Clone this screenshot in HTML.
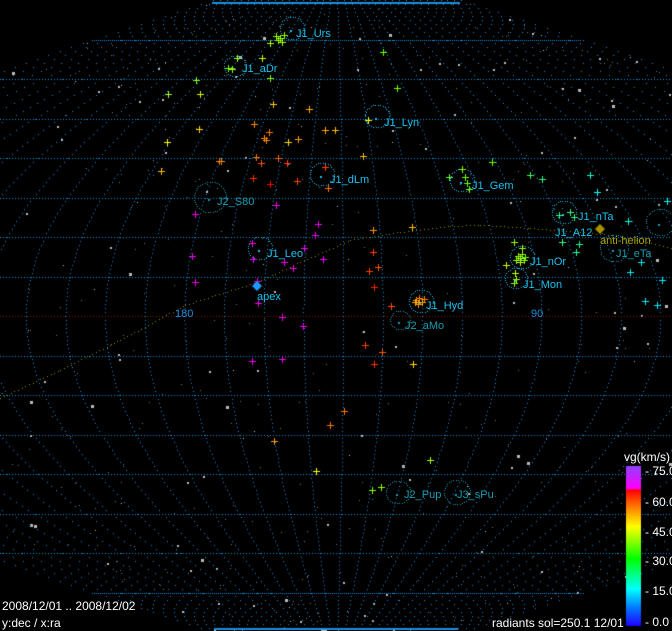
<!DOCTYPE html>
<html><head><meta charset="utf-8">
<style>
html,body{margin:0;padding:0;background:#000;}
#w{position:relative;width:672px;height:631px;overflow:hidden;background:#000;font-family:"Liberation Sans",sans-serif;}
canvas{position:absolute;left:0;top:0;}
.t{position:absolute;font-size:11px;line-height:11px;white-space:nowrap;}
.c{color:#1ac0f0;}
.d{color:#1a9cb0;}
.wh{color:#fff;font-size:12px;line-height:12px;}
</style></head><body>
<div id="w">
<canvas id="cv" width="672" height="631"></canvas>
<div class="t c" style="left:296px;top:29px">J1_Urs</div>
<div class="t c" style="left:242px;top:64px">J1_aDr</div>
<div class="t c" style="left:384px;top:118px">J1_Lyn</div>
<div class="t c" style="left:330px;top:175px">J1_dLm</div>
<div class="t d" style="left:217px;top:197px">J2_S80</div>
<div class="t c" style="left:472px;top:181px">J1_Gem</div>
<div class="t c" style="left:578px;top:212px">J1_nTa</div>
<div class="t c" style="left:555px;top:228px">J1_A12</div>
<div class="t d" style="left:616px;top:249px">J1_eTa</div>
<div class="t c" style="left:530px;top:257px">J1_nOr</div>
<div class="t c" style="left:523px;top:280px">J1_Mon</div>
<div class="t c" style="left:267px;top:249px">J1_Leo</div>
<div class="t c" style="left:426px;top:301px">J1_Hyd</div>
<div class="t d" style="left:405px;top:321px">J2_aMo</div>
<div class="t d" style="left:404px;top:490px">J2_Pup</div>
<div class="t d" style="left:457px;top:490px">J3_sPu</div>
<div class="t c" style="left:257px;top:292px">apex</div>
<div class="t" style="left:600px;top:236px;color:#a8a000">anti-helion</div>
<div class="t" style="left:175px;top:309px;color:#1a90e0">180</div>
<div class="t" style="left:531px;top:309px;color:#1a90e0">90</div>
<div class="t wh" style="left:624px;top:451px">vg(km/s)</div>
<div class="t wh" style="left:645px;top:465px">- 75.0</div>
<div class="t wh" style="left:645px;top:496px">- 60.0</div>
<div class="t wh" style="left:645px;top:526px">- 45.0</div>
<div class="t wh" style="left:645px;top:555px">- 30.0</div>
<div class="t wh" style="left:645px;top:585px">- 15.0</div>
<div class="t wh" style="left:645px;top:616px">- 0.0</div>
<div class="t wh" style="left:2px;top:600px">2008/12/01 .. 2008/12/02</div>
<div class="t wh" style="left:2px;top:617px">y:dec / x:ra</div>
<div class="t wh" style="left:492px;top:617px">radiants sol=250.1 12/01</div>
</div>
<script>
var c=document.getElementById('cv').getContext('2d');
var CX=336,EQ=316,SP=3.95,K=714;
function px(x,y,col,w,h){c.fillStyle=col;c.fillRect(Math.round(x),Math.round(y),w||1,h||1);}
// grey stars
var s=12345;function r(){s=(s*16807)%2147483647;return s/2147483647;}
for(var i=0;i<700;i++){var lat=(r()*2-1)*80,lon=(r()*2-1)*180;var x=CX+lon/180*K*Math.cos(lat*Math.PI/180),y=EQ-lat*SP;if(x<0||x>672)continue;var z=r();px(x,y,z<0.7?'#777':'#bbb',z>0.95?3:(z>0.8?2:1),z>0.95?3:(z>0.8?2:1));}
// meridians
for(var k=-18;k<=18;k++){var lon=1.8+10*k;for(var lat=-80;lat<=80;lat+=1){var x=CX+lon/180*K*Math.cos(lat*Math.PI/180),y=EQ-lat*SP;if(x>=0&&x<672)px(x,y,'#0a8fe0');}}
// parallels
for(var j=-7;j<=7;j++){var lat=j*10,y=Math.round(EQ-lat*SP);var hw=K*Math.cos(lat*Math.PI/180);var x0=Math.max(0,CX-hw),x1=Math.min(672,CX+hw);
 var col=j==0?'#8b1010':'#0a8fe0';var step=(Math.abs(j)==7)?2:3;for(var x=x0;x<x1;x+=step)px(x,y,col,Math.abs(j)==7?1:1);}
c.fillStyle='#1a90e0';c.fillRect(212,2,248,2);c.fillRect(214,628,244,2);
// ecliptic
var E=[[0,398],[60,370],[120,340],[185,305],[257,282],[300,262],[350,240],[400,232],[450,226],[480,225],[530,228],[580,232],[620,236],[672,248]];
for(var i=0;i<E.length-1;i++){var a=E[i],b=E[i+1],L=Math.hypot(b[0]-a[0],b[1]-a[1]);for(var t=0;t<L;t+=4)px(a[0]+(b[0]-a[0])*t/L,a[1]+(b[1]-a[1])*t/L,'#8a8a00');}
// circles
function circ(x,y,rr,col){for(var a=0;a<6.283;a+=2.5/rr)px(x+rr*Math.cos(a),y+rr*Math.sin(a)*0.95,col);px(x-2,y+2,col,2,2);}
var C1='#1ac0f0',C2='#1a9cb0';
[[292,28,12,C1],[235,66,11,C1],[377,116,12,C1],[322,174,12,C1],[210,197,16,C2],[462,180,12,C1],[564,212,12,C1],[614,248,14,C2],[660,222,14,C2],[522,257,12,C1],[516,278,11,C1],[260,248,12,C1],[421,301,12,C1],[400,320,10,C2],[398,492,12,C2],[457,492,13,C2]].forEach(function(q){circ(q[0],q[1],q[2],q[3]);});
// crosses
function cr(x,y,col){c.fillStyle=col;c.fillRect(x-3,y,7,1);c.fillRect(x,y-3,1,7);}
var X=[[280,38,'#9f0'],[282,42,'#af0'],[278,40,'#8f0'],[284,35,'#9f0'],[270,43,'#af0'],[276,36,'#9f0'],[228,68,'#8f0'],[232,69,'#9f0'],[237,58,'#af0'],[262,58,'#cf0'],[270,78,'#8f0'],[196,80,'#8f0'],[168,94,'#af3'],[200,94,'#cf0'],[383,52,'#6f0'],[397,88,'#7f0'],
[273,104,'#fc0'],[309,109,'#fa0'],[254,124,'#f80'],[199,129,'#fd0'],[269,132,'#f70'],[264,138,'#f80'],[266,140,'#f80'],[298,139,'#f90'],[288,142,'#fd0'],[167,142,'#ff0'],[325,130,'#fa0'],[335,130,'#fb0'],[368,120,'#ff0'],[363,156,'#fb0'],[219,161,'#f70'],[221,161,'#f80'],[256,157,'#f70'],[261,163,'#f50'],[278,158,'#f60'],[287,163,'#f40'],[161,171,'#fb0'],[325,167,'#f40'],[328,188,'#f70'],[253,178,'#f30'],[270,184,'#f00'],[297,181,'#f40'],
[276,205,'#e0e'],[195,214,'#e0e'],[318,224,'#e0e'],[315,235,'#e0e'],[304,248,'#e0e'],[252,243,'#e0e'],[373,230,'#f90'],[412,227,'#fb0'],[192,256,'#e0e'],[373,252,'#f40'],[253,259,'#e0e'],[284,262,'#e0e'],[323,259,'#e0e'],[293,268,'#e0e'],[369,271,'#f40'],[378,267,'#f50'],[195,282,'#e0e'],[257,281,'#e0e'],[374,287,'#f20'],[258,303,'#e0e'],[391,306,'#f50'],[282,317,'#e0e'],[303,326,'#e0e'],
[416,300,'#f90'],[419,298,'#f80'],[422,302,'#fa0'],[418,304,'#f90'],[424,299,'#f80'],[415,302,'#fa0'],
[365,345,'#f40'],[382,352,'#f50'],[374,364,'#f30'],[413,364,'#fd0'],[282,359,'#e0e'],[252,361,'#e0e'],[344,411,'#f70'],[330,425,'#f70'],[274,441,'#f90'],[316,471,'#ff0'],[430,460,'#af0'],[381,487,'#9f0'],[372,490,'#8f0'],
[492,162,'#6f0'],[449,177,'#6f3'],[465,177,'#7f0'],[467,183,'#6f0'],[469,189,'#7f0'],[462,169,'#8f0'],[530,175,'#3f6'],[542,179,'#2f8'],[590,175,'#0fc'],[597,192,'#0ff'],[667,201,'#0ff'],[570,212,'#3f8'],[559,215,'#3f8'],[574,217,'#3f8'],[628,221,'#0fd'],[514,242,'#9f0'],[522,248,'#af0'],[506,265,'#cf0'],[562,242,'#3f8'],[579,244,'#2f9'],[576,252,'#2f9'],[515,273,'#cf0'],[516,279,'#af0'],[514,283,'#9f0'],[630,272,'#0ef'],[641,262,'#0ef'],[662,280,'#0ef'],[645,301,'#0ef'],[657,305,'#0ef'],
[518,256,'#8f0'],[520,258,'#af0'],[522,254,'#9f0'],[524,260,'#8f0'],[516,260,'#9f0'],[520,262,'#bf0'],[525,257,'#7f0']];
X.forEach(function(q){cr(q[0],q[1],q[2]);});
// diamonds
function dia(x,y,rr,col){c.fillStyle=col;c.beginPath();c.moveTo(x,y-rr);c.lineTo(x+rr,y);c.lineTo(x,y+rr);c.lineTo(x-rr,y);c.closePath();c.fill();}
dia(257,286,5,'#1a9cff');dia(600,229,5,'#a89000');
// colorbar
var g=c.createLinearGradient(0,466,0,626);
g.addColorStop(0,'#9040ff');g.addColorStop(0.14,'#ff00ff');g.addColorStop(0.15,'#ff0000');g.addColorStop(0.26,'#ff8000');g.addColorStop(0.38,'#ffff00');g.addColorStop(0.58,'#00ff00');g.addColorStop(0.77,'#00ffff');g.addColorStop(0.88,'#0080ff');g.addColorStop(1,'#2000ff');
c.fillStyle=g;c.fillRect(626,466,15,160);
</script>
</body></html>
